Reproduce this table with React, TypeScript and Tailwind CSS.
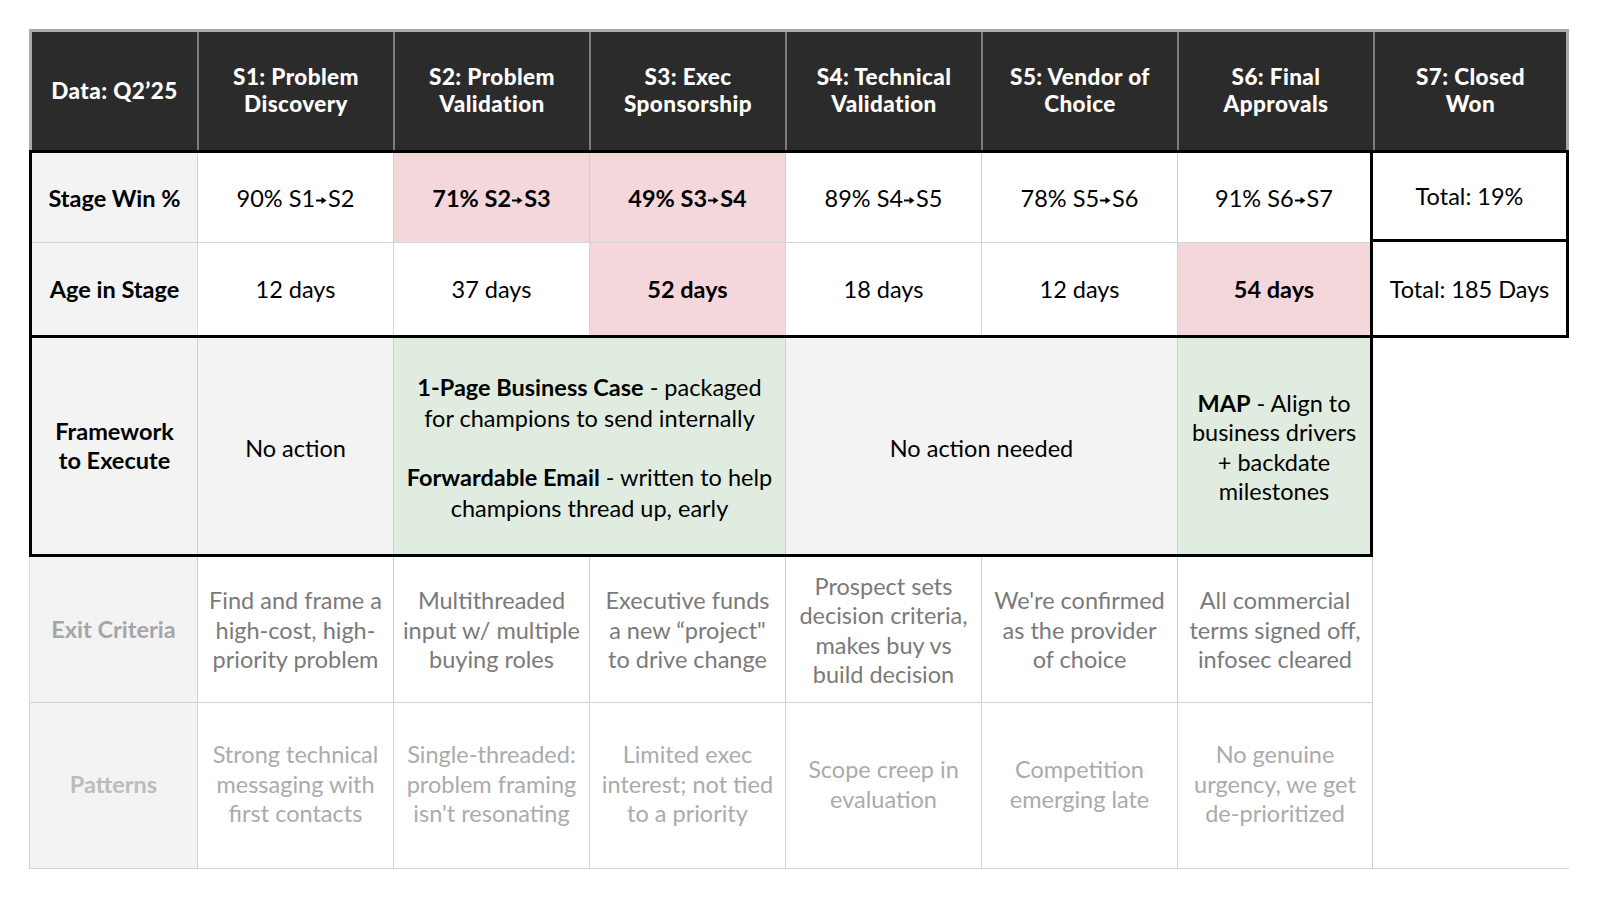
import React from 'react'

const headers: React.ReactNode[] = [
  <>Data: Q2’25</>,
  <>S1: Problem<br />Discovery</>,
  <>S2: Problem<br />Validation</>,
  <>S3: Exec<br />Sponsorship</>,
  <>S4: Technical<br />Validation</>,
  <>S5: Vendor of<br />Choice</>,
  <>S6: Final<br />Approvals</>,
  <>S7: Closed<br />Won</>,
]

type Cell = { from?: string; to?: string; text?: string; hot?: boolean }

const winRow: Cell[] = [
  { text: '90%', from: 'S1', to: 'S2' },
  { text: '71%', from: 'S2', to: 'S3', hot: true },
  { text: '49%', from: 'S3', to: 'S4', hot: true },
  { text: '89%', from: 'S4', to: 'S5' },
  { text: '78%', from: 'S5', to: 'S6' },
  { text: '91%', from: 'S6', to: 'S7' },
]

const ageRow: Cell[] = [
  { text: '12 days' },
  { text: '37 days' },
  { text: '52 days', hot: true },
  { text: '18 days' },
  { text: '12 days' },
  { text: '54 days', hot: true },
]

const exitRow = [
  ['Find and frame a', 'high-cost, high-', 'priority problem'],
  ['Multithreaded', 'input w/ multiple', 'buying roles'],
  ['Executive funds', 'a new “project"', 'to drive change'],
  ['Prospect sets', 'decision criteria,', 'makes buy vs', 'build decision'],
  ["We're confirmed", 'as the provider', 'of choice'],
  ['All commercial', 'terms signed off,', 'infosec cleared'],
]

const patternRow = [
  ['Strong technical', 'messaging with', 'first contacts'],
  ['Single-threaded:', 'problem framing', "isn't resonating"],
  ['Limited exec', 'interest; not tied', 'to a priority'],
  ['Scope creep in', 'evaluation'],
  ['Competition', 'emerging late'],
  ['No genuine', 'urgency, we get', 'de-prioritized'],
]

function Arrow() {
  return (
    <svg width="11" height="9" viewBox="0 0 11 9" className="mx-[1px] inline-block align-[2px]">
      <path d="M0 4.5h6" stroke="currentColor" strokeWidth="2" />
      <path d="M5.5 1l5 3.5-5 3.5z" fill="currentColor" />
    </svg>
  )
}

function StatCell({ cell }: { cell: Cell }) {
  return (
    <div
      className={
        'flex items-center justify-center border-l border-[#cfcfcf] pt-[2px] ' +
        (cell.hot ? 'bg-[#f4d7da] font-bold' : 'bg-white')
      }
    >
      <span className="whitespace-nowrap">
        {cell.text}
        {cell.from && (
          <>
            {' '}
            {cell.from}
            <Arrow />
            {cell.to}
          </>
        )}
      </span>
    </div>
  )
}

function Lines({ lines }: { lines: string[] }) {
  return (
    <div className="text-center">
      {lines.map((l, i) => (
        <div key={i} className="whitespace-nowrap">
          {l}
        </div>
      ))}
    </div>
  )
}

export default function App() {
  return (
    <div className="min-h-screen bg-white pl-[29px] pt-[29px] font-['Lato','Liberation_Sans',sans-serif] text-[23.5px] leading-[29.5px] text-black">
      <div className="w-[1540px]">
        {/* header */}
        <div className="grid h-[121px] grid-cols-[165px_repeat(6,196px)_1fr] border-[3px] border-b-0 border-[#a9a9a9] bg-[#2b2b2b] text-[22.5px] leading-[27px] font-black tracking-[0.4px] text-white">
          {headers.map((h, i) => (
            <div
              key={i}
              className={
                'flex items-center justify-center text-center ' +
                (i > 0 ? 'border-l-2 border-[#7d7d7d]' : '')
              }
            >
              <div className="pb-[2px]">{h}</div>
            </div>
          ))}
        </div>

        {/* stage win % + age in stage */}
        <div className="flex">
          <div className="grid w-[1344px] grid-cols-[165px_repeat(5,196px)_1fr] grid-rows-[89px_93px] border-[3px] border-black">
            <div className="flex items-center justify-center bg-[#f3f3f3] pt-[2px] font-bold">Stage Win %</div>
            {winRow.map((c, i) => (
              <StatCell key={i} cell={c} />
            ))}
            <div className="flex items-center justify-center border-t border-[#d6d6d6] bg-[#f3f3f3] pt-[2px] font-bold">
              Age in Stage
            </div>
            {ageRow.map((c, i) => (
              <div
                key={i}
                className={
                  'flex items-center justify-center border-l border-t border-[#d6d6d6] pt-[2px] ' +
                  (c.hot ? 'bg-[#f4d7da] font-bold' : 'bg-white')
                }
              >
                {c.text}
              </div>
            ))}
          </div>
          <div className="flex w-[196px] flex-col border-[3px] border-l-0 border-black">
            <div className="flex h-[89px] items-center justify-center border-b-[3px] border-black pt-[2px]">
              Total: 19%
            </div>
            <div className="flex flex-1 items-center justify-center pt-[2px]">Total: 185 Days</div>
          </div>
        </div>

        {/* framework */}
        <div className="flex">
          <div className="grid h-[219px] w-[1344px] grid-cols-[165px_196px_392px_392px_1fr] border-[3px] border-t-0 border-black">
            <div className="flex items-center justify-center bg-[#f3f3f3] text-center font-bold">
              <div>
                Framework
                <br />
                to Execute
              </div>
            </div>
            <div className="flex items-center justify-center border-l border-[#cfcfcf] bg-[#f3f3f3] pt-[5px]">
              No action
            </div>
            <div className="flex items-center justify-center border-l border-[#cfcfcf] bg-[#e1ece0] pt-[3px] text-center">
              <div className="leading-[30.5px]">
                <div>
                  <b>1-Page Business Case</b> - packaged
                </div>
                <div>for champions to send internally</div>
                <div className="h-[29px]" />
                <div>
                  <b>Forwardable Email</b> - written to help
                </div>
                <div>champions thread up, early</div>
              </div>
            </div>
            <div className="flex items-center justify-center border-l border-[#cfcfcf] bg-[#f3f3f3] pt-[5px]">
              No action needed
            </div>
            <div className="flex items-center justify-center border-l border-[#cfcfcf] bg-[#e1ece0] pt-[3px] text-center">
              <div>
                <div>
                  <b>MAP</b> - Align to
                </div>
                <div>business drivers</div>
                <div>+ backdate</div>
                <div>milestones</div>
              </div>
            </div>
          </div>
          <div className="w-[196px]" />
        </div>

        {/* exit criteria + patterns */}
        <div className="flex border-b border-[#d3d3d3]">
          <div className="grid w-[1344px] grid-cols-[168px_repeat(5,196px)_1fr] grid-rows-[145px_166px] border-r border-[#cfcfcf]">
            <div className="flex items-center justify-center border-l border-[#dcdcdc] bg-[#f3f3f3] font-bold text-[#a6a6a6]">
              Exit Criteria
            </div>
            {exitRow.map((lines, i) => (
              <div
                key={i}
                className="flex items-center justify-center border-l border-[#cfcfcf] pt-[2px] text-[#7a7a7a]"
              >
                <Lines lines={lines} />
              </div>
            ))}
            <div className="flex items-center justify-center border-l border-t border-[#d3d3d3] bg-[#f3f3f3] pb-[2px] font-bold text-[#bcbcbc]">
              Patterns
            </div>
            {patternRow.map((lines, i) => (
              <div
                key={i}
                className="flex items-center justify-center border-l border-t border-[#d3d3d3] pb-[2px] text-[#ababab]"
              >
                <Lines lines={lines} />
              </div>
            ))}
          </div>
          <div className="w-[196px]" />
        </div>
      </div>
    </div>
  )
}
